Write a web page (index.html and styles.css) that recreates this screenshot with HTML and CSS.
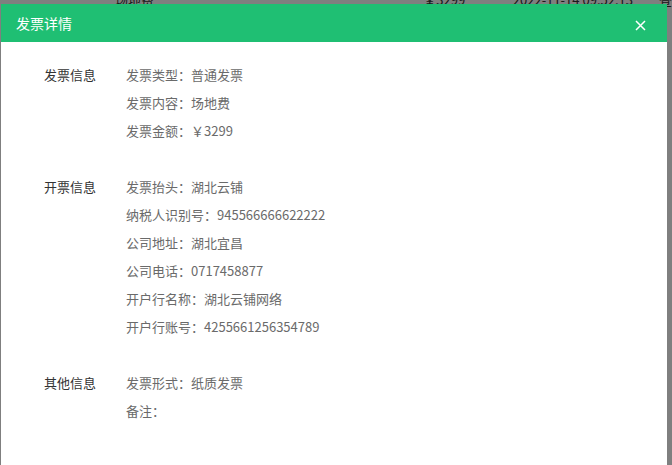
FILE: index.html
```html
<!DOCTYPE html>
<html lang="zh-CN">
<head>
<meta charset="utf-8">
<title>发票详情</title>
<link rel="stylesheet" href="styles.css">
</head>
<body>
<div class="page">
  <div class="page-row">
    <span class="c-name">场地费</span>
    <span class="c-amount">￥3299</span>
    <span class="c-time">2022-11-14 09:52:13</span>
    <span class="c-op">查</span>
  </div>
</div>
<div class="mask"></div>
<div class="modal">
  <div class="modal-header">
    <span class="modal-title">发票详情</span>
    <span class="modal-close">
      <svg width="11" height="11" viewBox="0 0 11 11"><path d="M1 1 L10 10 M10 1 L1 10" stroke="#fff" stroke-width="1.5" fill="none"/></svg>
    </span>
  </div>
  <div class="modal-body">
    <div class="group">
      <div class="group-label">发票信息</div>
      <div class="group-items">
        <div class="item">发票类型：普通发票</div>
        <div class="item">发票内容：场地费</div>
        <div class="item">发票金额：￥3299</div>
      </div>
    </div>
    <div class="group">
      <div class="group-label">开票信息</div>
      <div class="group-items">
        <div class="item">发票抬头：湖北云铺</div>
        <div class="item">纳税人识别号：945566666622222</div>
        <div class="item">公司地址：湖北宜昌</div>
        <div class="item">公司电话：0717458877</div>
        <div class="item">开户行名称：湖北云铺网络</div>
        <div class="item">开户行账号：4255661256354789</div>
      </div>
    </div>
    <div class="group">
      <div class="group-label">其他信息</div>
      <div class="group-items">
        <div class="item">发票形式：纸质发票</div>
        <div class="item">备注：</div>
      </div>
    </div>
  </div>
</div>
</body>
</html>
```
FILE: styles.css
```css
html, body {
  margin: 0;
  padding: 0;
  height: 100%;
  overflow: hidden;
}
body {
  font-family: "Noto Sans CJK SC", "Microsoft YaHei", sans-serif;
  font-size: 13px;
  background: #ffffff;
  position: relative;
}
.page-row {
  display: flex;
  height: 20px;
  line-height: 20px;
  margin-top: -10px;
  color: #333;
  font-size: 13px;
}
.c-name { margin-left: 115px; width: 310px; }
.c-amount { width: 90px; }
.c-time { width: 147px; }
.mask {
  position: absolute;
  inset: 0;
  background: rgba(0, 0, 0, 0.5);
}
.modal {
  position: absolute;
  left: 1px;
  top: 4px;
  bottom: 0;
  width: 666px;
  background: #fff;
  overflow: hidden;
}
.modal-header {
  height: 38px;
  background: #1fbf73;
  display: flex;
  align-items: center;
  justify-content: space-between;
  padding: 0 21px 0 15px;
}
.modal-title {
  color: #fff;
  font-size: 14px;
}
.modal-close {
  display: flex;
  width: 11px;
  height: 11px;
  margin-top: 4px;
}
.modal-body {
  padding: 19px 0 0 43px;
}
.group {
  display: flex;
  margin-bottom: 28px;
}
.group-label {
  width: 82px;
  line-height: 28px;
  color: #333;
}
.group-items {
  display: flex;
  flex-direction: column;
}
.item {
  line-height: 28px;
  color: #6a6a6a;
}
```
